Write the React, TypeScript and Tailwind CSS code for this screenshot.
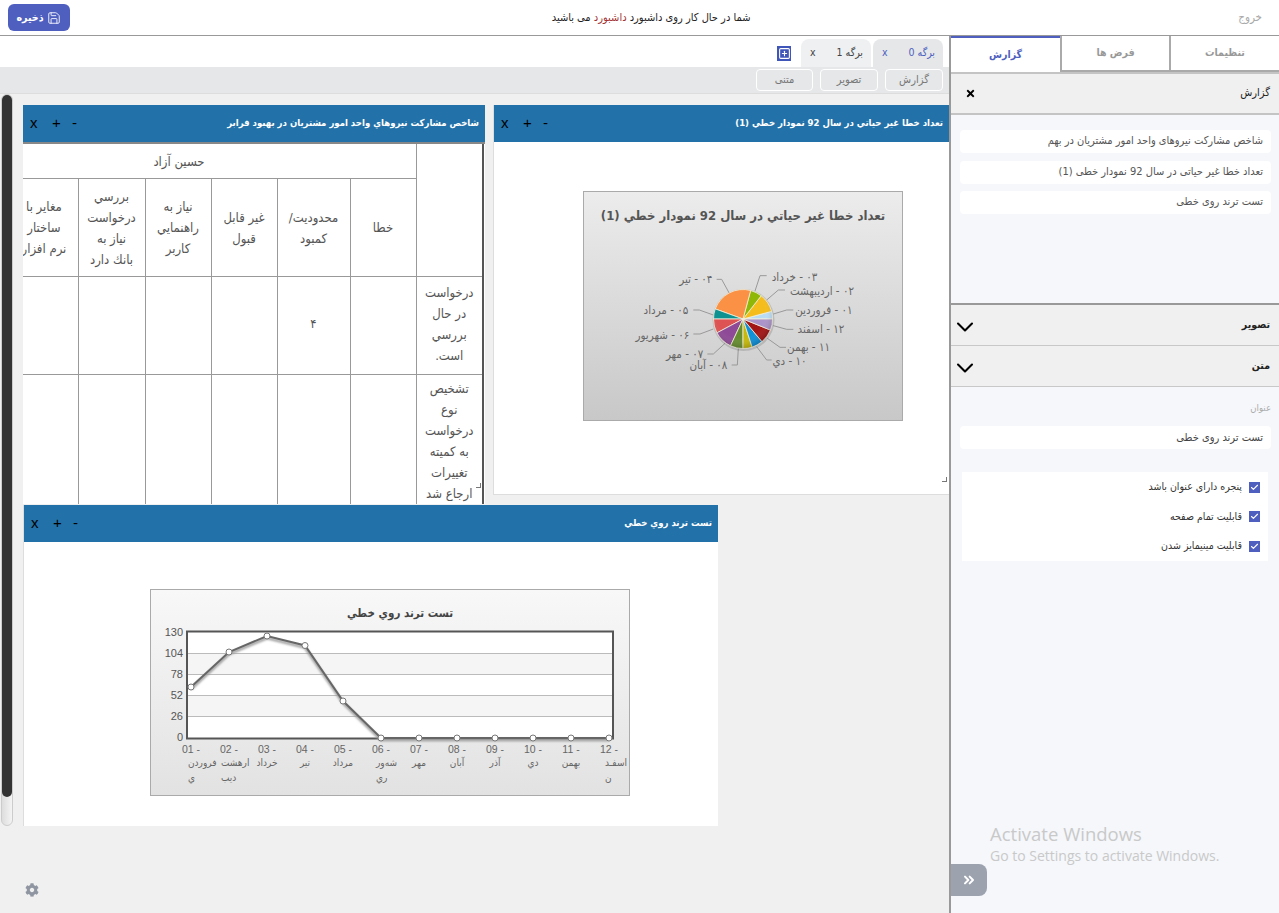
import { ChevronDown, ChevronsRight, Save, SquarePlus, Check } from "lucide-react";
import { FaCog, FaTimes } from "react-icons/fa";

const pieSlices = [
  { from: -15, to: 0, color: "#b9dcf5" },
  { from: -52, to: -15, color: "#f5bd1b" },
  { from: -75, to: -52, color: "#8fb708" },
  { from: -160, to: -75, color: "#fb9144" },
  { from: -180, to: -160, color: "#0e9191" },
  { from: 152, to: 180, color: "#dd5353" },
  { from: 115, to: 152, color: "#8e4a96" },
  { from: 90, to: 115, color: "#668c30" },
  { from: 72, to: 90, color: "#c6b90c" },
  { from: 50, to: 72, color: "#0f90d8" },
  { from: 22, to: 50, color: "#a31616" },
  { from: 0, to: 22, color: "#ab94c9" },
];

// leader line points and label edge, in 3x crop coordinates of the chart
const pieLabels = [
  { text: "۰۳ - خرداد", x: 712, y: 275, line: [525, 318, 540, 272, 560, 272] },
  { text: "۰۲ - اردیبهشت", x: 822, y: 317, line: [560, 345, 595, 315, 615, 315] },
  { text: "۰۱ - فروردین", x: 818, y: 375, line: [580, 387, 620, 375, 640, 375] },
  { text: "۱۲ - اسفند", x: 793, y: 432, line: [580, 422, 620, 433, 640, 433] },
  { text: "۱۱ - بهمن", x: 750, y: 487, line: [562, 460, 600, 487, 618, 487] },
  { text: "۱۰ - دي", x: 680, y: 527, line: [530, 485, 560, 525, 575, 525] },
  { text: "۰۸ - آبان", x: 442, y: 540, line: [475, 490, 472, 540, 455, 540] },
  { text: "۰۷ - مهر", x: 370, y: 507, line: [435, 475, 400, 507, 382, 507] },
  { text: "۰۶ - شهریور", x: 328, y: 450, line: [400, 432, 360, 447, 340, 447] },
  { text: "۰۵ - مرداد", x: 325, y: 375, line: [400, 390, 358, 375, 340, 375] },
  { text: "۰۴ - تیر", x: 397, y: 283, line: [448, 325, 425, 283, 410, 283] },
];

// left is set where the label overflows its slot and starts at the slot's edge
const trend: { x: number; y: number; lines: string[]; left?: number }[] = [
  { x: 191, y: 687, lines: ["01 -", "فروردن", "ي"], left: 188 },
  { x: 229, y: 652, lines: ["02 -", "ارهشت", "ديب"], left: 221 },
  { x: 267, y: 636, lines: ["03 -", "خرداد"] },
  { x: 305, y: 645.5, lines: ["04 -", "تير"] },
  { x: 343, y: 701, lines: ["05 -", "مرداد"] },
  { x: 381, y: 738, lines: ["06 -", "شه‌ور", "ري"], left: 376 },
  { x: 419, y: 738, lines: ["07 -", "مهر"] },
  { x: 457, y: 738, lines: ["08 -", "آبان"] },
  { x: 495, y: 738, lines: ["09 -", "آذر"] },
  { x: 533, y: 738, lines: ["10 -", "دي"] },
  { x: 571, y: 738, lines: ["11 -", "بهمن"] },
  { x: 609, y: 738, lines: ["12 -", "اسفـد", "ن"], left: 605 },
];

function slicePath(from: number, to: number) {
  const cx = 743;
  const cy = 319;
  const r = 29.5;
  const a = (from * Math.PI) / 180;
  const b = (to * Math.PI) / 180;
  const large = to - from > 180 ? 1 : 0;
  return `M${cx} ${cy}L${cx + r * Math.cos(a)} ${cy + r * Math.sin(a)}A${r} ${r} 0 ${large} 1 ${cx + r * Math.cos(b)} ${cy + r * Math.sin(b)}Z`;
}

function PieChart() {
  return (
    <svg viewBox="584 192 318 228" className="box-content block h-[228px] w-[318px] border border-[#aaaaaa]">
      <defs>
        <linearGradient id="pieBg" x1="0" y1="0" x2="0" y2="1">
          <stop offset="0" stopColor="#ececec" />
          <stop offset="1" stopColor="#c8c8c8" />
        </linearGradient>
        <radialGradient id="pieGloss" cx="0.45" cy="0.4" r="0.6">
          <stop offset="0.7" stopColor="#ffffff" stopOpacity="0" />
          <stop offset="1" stopColor="#000000" stopOpacity="0.18" />
        </radialGradient>
      </defs>
      <rect x="584" y="192" width="318" height="228" fill="url(#pieBg)" />
      <text x="743" y="220" textAnchor="middle" fontSize="13" letterSpacing="-0.6" fontWeight="700" fill="#555555">
        تعداد خطا غير حياتي در سال 92 نمودار خطي (1)
      </text>
      {pieLabels.map((l) => (
        <g key={l.text}>
          <polyline
            points={l.line.map((v, i) => (i % 2 ? 185 + v / 3 : 580 + v / 3)).join(" ")}
            fill="none"
            stroke="#999999"
            strokeWidth="1"
          />
          <text x={580 + l.x / 3} y={185 + l.y / 3 + 4} textAnchor="start" fontSize="11.5" fill="#666666">
            {l.text}
          </text>
        </g>
      ))}
      <circle cx="743.5" cy="320" r="31" fill="#00000022" />
      {pieSlices.map((s) => (
        <path key={s.color} d={slicePath(s.from, s.to)} fill={s.color} stroke="#f4f0dc" strokeWidth="0.8" />
      ))}
      <circle cx="743" cy="319" r="29.5" fill="url(#pieGloss)" />
    </svg>
  );
}

function TrendChart() {
  return (
    <svg viewBox="151 590 478 205" className="box-content block h-[205px] w-[478px] border border-[#aaaaaa] [direction:ltr]">
      <defs>
        <linearGradient id="trendBg" x1="0" y1="0" x2="0" y2="1">
          <stop offset="0" stopColor="#f8f8f8" />
          <stop offset="1" stopColor="#e2e2e2" />
        </linearGradient>
        <filter id="lineBlur">
          <feGaussianBlur stdDeviation="1.2" />
        </filter>
      </defs>
      <rect x="151" y="590" width="478" height="205" fill="url(#trendBg)" />
      <text x="400" y="617" textAnchor="middle" fontSize="11.5" fontWeight="700" fill="#444444">
        تست ترند روي خطي
      </text>
      <rect x="187" y="631" width="426" height="107" fill="#ffffff" />
      <rect x="187" y="653" width="426" height="21" fill="#f5f5f5" />
      <rect x="187" y="695" width="426" height="21" fill="#f5f5f5" />
      {[653, 674, 695, 716].map((y) => (
        <line key={y} x1="187" x2="613" y1={y + 0.5} y2={y + 0.5} stroke="#bbbbbb" />
      ))}
      <rect x="187" y="631.5" width="426" height="107" fill="none" stroke="#555555" strokeWidth="2" />
      {["130", "104", "78", "52", "26", "0"].map((t, i) => (
        <text key={t} x="183" y={636 + i * 21} textAnchor="end" fontSize="11" fill="#555555" fontFamily="Liberation Sans">
          {t}
        </text>
      ))}
      <polyline
        points={trend.map((p) => `${p.x},${p.y + 2}`).join(" ")}
        fill="none"
        stroke="#999999"
        strokeWidth="2.5"
        filter="url(#lineBlur)"
      />
      <polyline points={trend.map((p) => `${p.x},${p.y}`).join(" ")} fill="none" stroke="#666666" strokeWidth="2" />
      {trend.map((p) => (
        <circle key={p.x} cx={p.x} cy={p.y} r="3" fill="#ffffff" stroke="#777777" />
      ))}
      {trend.map((p) =>
        p.lines.map((t, i) => (
          <text
            key={t}
            x={i > 0 && p.left ? p.left : p.x}
            y={[753, 766, 781][i]}
            textAnchor={i > 0 && p.left ? "start" : "middle"}
            fontSize={i === 0 ? 10.5 : 10}
            fill="#666666"
            fontFamily={i === 0 ? "Liberation Sans" : undefined}
          >
            {t}
          </text>
        )),
      )}
    </svg>
  );
}

function WidgetHeader({ title }: { title: string }) {
  return (
    <div className="flex h-[37px] items-center justify-between bg-[#2272a9] pr-1.5 text-[9.5px] font-bold tracking-[-0.7px] text-white">
      <span className="whitespace-nowrap">{title}</span>
      <div dir="ltr" className="flex w-[70px] shrink-0 items-center pl-[7px] font-['Liberation_Sans'] text-[15px] font-normal tracking-normal text-black">
        <span className="w-[22px]">x</span>
        <span className="w-[20px]">+</span>
        <span>-</span>
      </div>
    </div>
  );
}

const cell = "border border-[#999999] text-center align-middle font-normal";

function ReportTable() {
  return (
    <div className="h-[362px] overflow-hidden border-t-2 border-[#888888]">
      <table className="-mt-px mr-px w-[473px] table-fixed border-collapse border-r-2 border-[#555555] text-[13px] leading-[21px] text-[#555555]">
        <colgroup>
          <col className="w-[67px]" />
          <col className="w-[66px]" />
          <col className="w-[73px]" />
          <col className="w-[66px]" />
          <col className="w-[66px]" />
          <col className="w-[67px]" />
          <col className="w-[68px]" />
        </colgroup>
        <tbody>
          <tr className="h-[35px]">
            <th rowSpan={2} className={cell}></th>
            <th colSpan={6} className={`${cell} pr-[68px]`}>حسين آزاد</th>
          </tr>
          <tr className="h-[98px]">
            <th className={cell}>خطا</th>
            <th className={cell}>محدوديت/<br />کمبود</th>
            <th className={cell}>غير قابل<br />قبول</th>
            <th className={cell}>نياز به<br />راهنمايي<br />کاربر</th>
            <th className={cell}>بررسي<br />درخواست<br />نياز به<br />بانك دارد</th>
            <th className={cell}><span className="whitespace-nowrap">مغاير با<br />ساختار<br />نرم افزار</span></th>
          </tr>
          <tr className="h-[98px]">
            <td className={`${cell} pb-[3px]`}>درخواست<br />در حال<br />بررسي<br />است.</td>
            <td className={cell}></td>
            <td className={`${cell} pb-[5px]`}>۴</td>
            <td className={cell}></td>
            <td className={cell}></td>
            <td className={cell}></td>
            <td className={cell}></td>
          </tr>
          <tr className="h-[130px]">
            <td className={`${cell} !align-top pt-[3px]`}>تشخيص<br />نوع<br />درخواست<br />به کميته<br />تغييرات<br />ارجاع شد</td>
            <td className={cell}></td>
            <td className={cell}></td>
            <td className={cell}></td>
            <td className={cell}></td>
            <td className={cell}></td>
            <td className={cell}></td>
          </tr>
        </tbody>
      </table>
    </div>
  );
}

function Accordion({ title }: { title: string }) {
  return (
    <div className="flex h-[41px] items-center justify-between border-b border-[#c8c8c8] bg-[#f0f0f0] pl-[0px] pr-[9px] text-[10.5px] font-bold text-[#222222]">
      <span>{title}</span>
      <ChevronDown size={28} strokeWidth={1.8} className="mt-1 text-black" />
    </div>
  );
}

function CheckRow({ label }: { label: string }) {
  return (
    <div className="flex h-[29.5px] items-center gap-[7px] pr-[8px] text-[10.5px] text-[#333333]">
      <span className="flex h-[11px] w-[11px] items-center justify-center bg-[#4f5fc0]">
        <Check size={9} strokeWidth={3} className="text-white" />
      </span>
      <span>{label}</span>
    </div>
  );
}

function Sidebar() {
  return (
    <aside className="relative flex w-[330px] shrink-0 flex-col border-l-2 border-[#999999] bg-[#f5f7fb]">
      <div className="flex h-[36px] bg-white text-[10.5px] font-bold text-[#999999]">
        <div className="flex w-[108px] items-center justify-center border-b-2 border-[#aaaaaa]">تنظيمات</div>
        <div className="flex w-[111px] items-center justify-center border-x-2 border-b-2 border-[#aaaaaa]">فرض ها</div>
        <div className="flex flex-1 items-center justify-center border-t-2 border-[#4f5fc0] text-[#4f5fc0]">گزارش</div>
      </div>
      <div className="flex h-[43px] items-center justify-between border-y-2 border-[#c4c4c4] bg-[#f0f0f0] pl-[14px] pr-[9px] text-[11px] text-[#222222]">
        <span>گزارش</span>
        <FaTimes size={11} className="text-black" />
      </div>
      <div className="flex h-[190px] flex-col gap-[7.5px] border-b-2 border-[#999999] pl-[9px] pr-[8px] pt-[15px] text-[11px] text-[#555555]">
        <div className="flex h-[23px] items-center rounded bg-white px-2 tracking-[-0.3px]">شاخص مشارکت نیروهای واحد امور مشتریان در بهم</div>
        <div className="flex h-[23px] items-center rounded bg-white px-2">تعداد خطا غیر حیاتی در سال 92 نمودار خطی (1)</div>
        <div className="flex h-[23px] items-center rounded bg-white px-2">تست ترند روی خطی</div>
      </div>
      <Accordion title="تصویر" />
      <Accordion title="متن" />
      <div className="pl-[9px] pr-[8px] pt-[14px]">
        <div className="text-[9.5px] text-[#aaaaaa]">عنوان</div>
        <div className="mt-[11px] flex h-[23px] items-center rounded bg-white px-2 text-[11px] text-[#444444]">تست ترند روی خطی</div>
        <div className="ml-[2px] mr-[3px] mt-[23px] bg-white">
          <CheckRow label="پنجره دارای عنوان باشد" />
          <CheckRow label="قابلیت تمام صفحه" />
          <CheckRow label="قابلیت مینیمایز شدن" />
        </div>
      </div>
      <div dir="ltr" className="absolute left-[39px] top-[787px] font-['Open_Sans'] font-stretch-normal text-[#c9c9c9]">
        <div className="text-[18.5px] leading-[22px]">Activate Windows</div>
        <div className="text-[14px] leading-[21px]">Go to Settings to activate Windows.</div>
      </div>
      <div className="absolute left-0 top-[828px] flex h-[32px] w-[36px] items-center justify-center rounded-r-lg bg-[#9ca3af]">
        <ChevronsRight size={16} strokeWidth={3} className="text-white" />
      </div>
    </aside>
  );
}

export default function App() {
  return (
    <div dir="rtl" className="flex h-[913px] w-[1279px] flex-col overflow-hidden bg-[#f0f0f0] font-['DejaVu_Sans_Condensed','DejaVu_Sans',sans-serif] font-stretch-condensed">
      <header className="flex h-[36px] shrink-0 items-center justify-between border-b border-[#999999] bg-white pl-[8px] pr-[17px]">
        <span className="text-[11.5px] text-[#aaaaaa]">خروج</span>
        <span className="mr-[6px] pt-px text-[11px] text-[#222222]">
          شما در حال کار روی داشبورد <span className="text-[#a33333]">داشبورد</span> می باشید
        </span>
        <button className="flex h-[27px] w-[62px] items-center justify-center gap-1 rounded-md bg-[#4f5fc0] text-[10.5px] font-bold text-white">
          <Save size={14} strokeWidth={1.5} />
          ذخیره
        </button>
      </header>

      <div className="flex min-h-0 flex-1">
        <Sidebar />
        <main className="flex min-w-0 flex-1 flex-col">
          <div className="flex h-[31px] shrink-0 items-end gap-[2px] bg-white pr-[6px] text-[10.5px] text-[#444444]">
            <div className="flex h-[28px] w-[70px] items-center justify-between rounded-t-lg bg-[#e5e7e9] pl-[9px] pr-[8px] text-[#4f5fc0]">
              <span>برگه 0</span>
              <span>x</span>
            </div>
            <div className="flex h-[28px] w-[70px] items-center justify-between rounded-t-lg bg-[#eef0f2] pl-[9px] pr-[8px]">
              <span>برگه 1</span>
              <span>x</span>
            </div>
            <div className="mb-[6px] mr-[8px] flex h-[15px] w-[14px] items-center justify-center bg-[#3f55b8]">
              <SquarePlus size={13} strokeWidth={2} className="text-white" />
            </div>
          </div>
          <div className="flex h-[27px] shrink-0 items-center gap-[7px] border-b border-[#dddddd] bg-[#e5e7e9] pr-[6px] text-[11px] text-[#777777]">
            <div className="flex h-[22px] w-[58px] items-center justify-center rounded-sm border border-white">گزارش</div>
            <div className="flex h-[22px] w-[58px] items-center justify-center rounded-sm border border-white">تصویر</div>
            <div className="flex h-[22px] w-[57px] items-center justify-center rounded-sm border border-white">متنی</div>
          </div>

          <div className="relative flex-1 overflow-hidden">
            <div className="absolute left-[1px] top-0 h-[732px] w-[12px] rounded-full border border-[#cccccc] bg-gradient-to-r from-[#dddddd] to-[#f4f4f4]">
              <div className="h-[702px] rounded-full bg-[#333333]" />
            </div>

            <section className="absolute left-[493px] top-[11px] h-[390px] w-[456px] border-b border-l border-[#dddddd] bg-white">
              <WidgetHeader title="تعداد خطا غير حياتي در سال 92 نمودار خطي (1)" />
              <div className="mr-[46px] mt-[49px] w-[320px]">
                <PieChart />
              </div>
              <span className="absolute bottom-[12px] right-[2px] h-[5px] w-[5px] border-b border-r border-[#777777]" />
            </section>

            <section className="absolute left-[23px] top-[11px] h-[399px] w-[462px] overflow-hidden bg-white">
              <WidgetHeader title="شاخص مشارکت نيروهاي واحد امور مشتريان در بهبود فرابر" />
              <ReportTable />
              <span className="absolute bottom-[16px] right-[4px] h-[5px] w-[5px] border-b border-r border-[#777777]" />
            </section>

            <section className="absolute left-[23px] top-[411px] h-[321px] w-[695px] border-l border-[#dddddd] bg-white">
              <WidgetHeader title="تست ترند روي خطي" />
              <div className="mr-[88px] mt-[47px] w-[480px]">
                <TrendChart />
              </div>
            </section>

            <FaCog size={14} className="absolute bottom-[16px] left-[25px] text-[#8f96a1]" />
          </div>
        </main>
      </div>
    </div>
  );
}
